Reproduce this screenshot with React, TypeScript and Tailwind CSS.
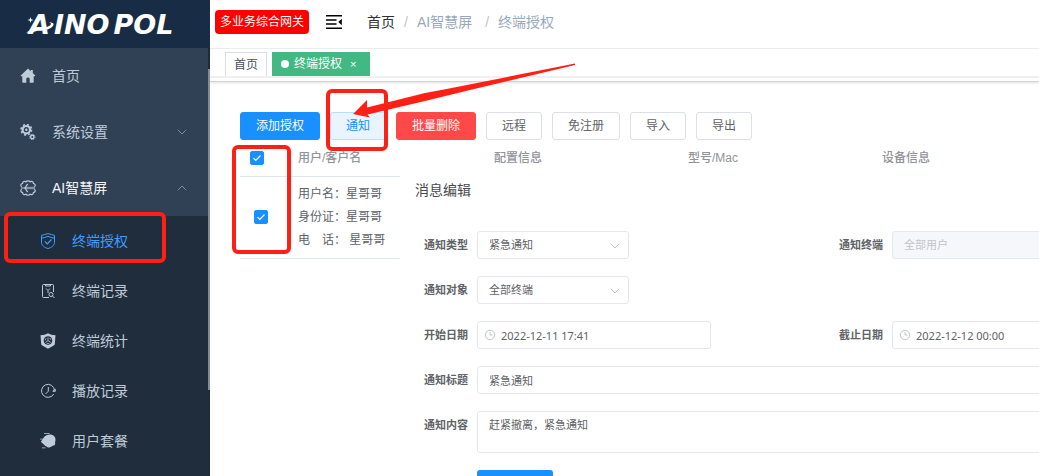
import React from 'react';
import clsx from 'clsx';

type IconProps = { className?: string };

const HomeIcon = ({ className }: IconProps) => (
  <svg viewBox="0 0 16 16" fill="currentColor" className={className}>
    <path d="M8 .6 1 7.200c-.5.5-.2 1.100.4 1.100h.9v5.400c0 .6.4 1 1 1h3v-3.600c0-2 3.400-2 3.400 0v3.600h3c.6 0 1-.4 1-1V8.300h.9c.6 0 .9-.6.4-1.100L12.800 5V2h-2v1.200z" />
  </svg>
);

const GearsIcon = ({ className }: IconProps) => (
  <svg viewBox="0 0 16 16" fill="none" stroke="currentColor" className={className}>
    <circle cx="6.300" cy="5.700" r="3.700" strokeWidth="2.200" />
    <circle cx="6.300" cy="5.700" r="5.200" strokeWidth="1.600" strokeDasharray="2.040 2.040" />
    <circle cx="6.300" cy="5.700" r="1.200" fill="currentColor" stroke="none" />
    <circle cx="12.300" cy="13" r="1.700" strokeWidth="1.400" />
    <circle cx="12.300" cy="13" r="2.700" strokeWidth="1" strokeDasharray="1.060 1.060" />
  </svg>
);

const BrainIcon = ({ className }: IconProps) => (
  <svg viewBox="0 0 16 16" fill="none" stroke="currentColor" strokeWidth="1.200" className={className}>
    <path d="M1.600 6.800C.2 5.600.8 3.700 2.600 3.500 2.400 1.700 4.500.7 5.800 1.900 6.600.4 9.400.4 10.200 1.900c1.300-1.200 3.400-.2 3.200 1.600 1.800.2 2.400 2.100 1 3.300" />
    <path d="M1.600 9.200C.2 10.400.8 12.300 2.600 12.500c-.2 1.800 1.900 2.800 3.200 1.600.8 1.500 3.600 1.500 4.400 0 1.300 1.200 3.400.2 3.200-1.600 1.800-.2 2.400-2.100 1-3.300" />
    <path d="M4.500 8H15" strokeWidth="2.400" opacity=".6" />
    <path d="M1 8h5M8 4.200C6.300 4.500 6.300 6.800 5 8c1.300 1.200 1.300 3.500 3 3.800" />
  </svg>
);

const ShieldIcon = ({ className }: IconProps) => (
  <svg viewBox="0 0 16 16" fill="none" stroke="currentColor" className={className}>
    <path d="M8 .6C6 1.300 3.600 1.500 1.500 2.400v6.800C1.500 12.600 4.500 14.600 8 15.500c3.500-.9 6.500-2.900 6.500-6.300V2.400C12.400 1.500 10 1.300 8 .6z" />
    <path d="M1.500 5.200C4 4.900 6 4.100 8 3.300c2 .8 4 1.600 6.500 1.900" />
    <path d="m4.800 8.400 2.500 2.500L11.500 6.500" strokeWidth="1.200" />
  </svg>
);

const RecordIcon = ({ className }: IconProps) => (
  <svg viewBox="0 0 16 16" fill="none" stroke="currentColor" className={className}>
    <path d="M9 14.500H3.500a1 1 0 0 1-1-1v-11a1 1 0 0 1 1-1h9a1 1 0 0 1 1 1V9" />
    <path d="M5.500 1v2h5V1M6 5.500l2 2 2-2M8 7.500V10" />
    <circle cx="11" cy="11.500" r="2" />
    <path d="m12.500 13 2 2" />
  </svg>
);

const StatsIcon = ({ className }: IconProps) => (
  <svg viewBox="0 0 16 16" className={className}>
    <path
      fill="currentColor"
      d="M8 .3c2 1.200 4.600 1.900 7.500 2l-.7 8.700c-.1.800-.5 1.300-1.100 1.600L8 15.700l-5.700-3.100c-.6-.3-1-.8-1.100-1.600L.5 2.300C3.400 2.200 6 1.500 8 .3z"
    />
    <circle cx="8" cy="7.500" r="4.300" className="fill-[#1f2d3d]" />
    <path
      d="M8 4.300v3.200l-2.500 2M8 7.500l2.800 1.900M6 5.400l-.8 2M9.700 5l1.300 1.800M6.800 10.400h2.400"
      fill="none"
      stroke="currentColor"
      strokeWidth=".8"
    />
  </svg>
);

const HistoryIcon = ({ className }: IconProps) => (
  <svg viewBox="0 0 16 16" fill="none" stroke="currentColor" className={className}>
    <path d="M13.700 11A6.500 6.500 0 1 1 14.500 7.500" />
    <path d="M15.300 6.300v2h-2.500zM8.300 4v4.200L5.500 11" />
  </svg>
);

const PackageIcon = ({ className }: IconProps) => (
  <svg viewBox="0 0 16 16" fill="currentColor" className={className}>
    <path d="M9.500 1.500c3.500-.2 6 2 6 5 0 1.200-.1 2-.5 2.900.5 1.500 0 2.900-1.500 3-1.200.1-2 1-3.200 1.700-1.600.9-3 .5-3.800-.6C5 13 4.600 12 3.300 11L.8 8.800 2.600 6.600C3.800 3.600 6 1.800 9.500 1.500z" />
    <path d="M4 .3h5.500v.7H4zM.2 5.800h3v.7h-3zM2 14.500h3.500v.7H2z" />
  </svg>
);

const Chevron = ({ className }: IconProps) => (
  <svg viewBox="0 0 10 6" fill="none" stroke="currentColor" className={className}>
    <path d="m.8.8 4.200 4.200L9.200.8" />
  </svg>
);

const ClockIcon = ({ className }: IconProps) => (
  <svg viewBox="0 0 12 12" fill="none" stroke="currentColor" className={className}>
    <circle cx="6" cy="6" r="4.700" />
    <path d="M6 3v3h2.500" />
  </svg>
);

const FoldIcon = ({ className }: IconProps) => (
  <svg viewBox="0 0 16 16" fill="none" stroke="currentColor" className={className}>
    <path d="M0 1.700h16M0 6h10.500M0 10h10.500M0 14.300h16" strokeWidth="1.500" />
    <path d="M15.800 4.800v6.400L12.300 8z" fill="currentColor" stroke="none" />
  </svg>
);

const Logo = () => (
  <a
    href="#"
    className="relative flex h-12 shrink-0 items-center gap-1 bg-[#182c45] pl-[29px] font-['DejaVu_Sans',sans-serif] text-[27px] leading-none font-bold text-white italic"
  >
    <span>A</span>
    <span>INO</span>
    <span>POL</span>
    <svg viewBox="0 0 32 22" fill="none" className="absolute top-3 left-6 h-[22px] w-8">
      <path d="M9 18c9 .8 16-1.500 20-5" stroke="#182c45" strokeWidth="1.500" />
      <path
        d="M2 20.500h6c3-1.600 6-2 9-1.800 6-.3 11.500-2.800 12.500-5.700.6-1.800-1.500-2.800-4.500-2.800 2 .7 2.600 1.700 1.200 3C23.500 15.600 17 16.500 10 16.800z"
        fill="#fff"
      />
      <path d="m6.500 5 .7 2.300 2.300.7-2.300.7-.7 2.300-.7-2.300L3.500 8l2.300-.7z" fill="#fff" />
    </svg>
  </a>
);

const menu = [
  { label: '首页', Icon: HomeIcon },
  { label: '系统设置', Icon: GearsIcon, chevron: 'down' },
  { label: 'AI智慧屏', Icon: BrainIcon, chevron: 'up' },
];

const subMenu = [
  { label: '终端授权', Icon: ShieldIcon },
  { label: '终端记录', Icon: RecordIcon },
  { label: '终端统计', Icon: StatsIcon },
  { label: '播放记录', Icon: HistoryIcon },
  { label: '用户套餐', Icon: PackageIcon },
];

const Marker = ({ className }: IconProps) => (
  <div
    className={clsx(
      'pointer-events-none absolute z-20 rounded-md border-4 border-[#ff2015]',
      className
    )}
  />
);

const Sidebar = () => (
  <aside className="flex w-[210px] shrink-0 flex-col bg-[#304156] text-sm text-[#bfcbd9]">
    <Logo />
    <div className="flex flex-1">
      <nav className="flex flex-1 flex-col">
        <ul>
          {menu.map(({ label, Icon, chevron }) => (
            <li key={label}>
              <a
                href="#"
                className={clsx(
                  'flex h-14 items-center px-5',
                  chevron === 'up' && 'text-[#f4f4f5]'
                )}
              >
                <Icon className="mr-4 h-4 w-4 text-[#bfcbd9]" />
                <span className="flex-1">{label}</span>
                {chevron && (
                  <Chevron
                    className={clsx(
                      'mr-px h-1.5 w-2.5 text-[#7f8b99]',
                      chevron === 'up' && 'rotate-180'
                    )}
                  />
                )}
              </a>
            </li>
          ))}
        </ul>
        <ul className="flex-1 bg-[#1f2d3d]">
          {subMenu.map(({ label, Icon }, i) => (
            <li key={label} className="relative">
              <a
                href="#"
                className={clsx(
                  'flex h-[50px] items-center gap-4 pl-10',
                  i === 0 && 'text-[#409eff]'
                )}
              >
                <Icon className="h-4 w-4" />
                {label}
              </a>
              {i === 0 && <Marker className="-top-1 left-1 h-[51px] w-[162px]" />}
            </li>
          ))}
        </ul>
      </nav>
      <div className="w-0.5 bg-[#1f2a38] pt-[21px]">
        <div className="h-[321px] bg-[#858c96]" />
      </div>
    </div>
  </aside>
);

const Header = () => (
  <header className="flex h-[49px] shrink-0 items-center border-b border-[#f0f1f2] px-[5px] pb-1">
    <span className="rounded bg-[#ff0000] px-[5px] text-xs leading-6 text-white">
      多业务综合网关
    </span>
    <button type="button" aria-label="Toggle menu" className="ml-[17px]">
      <FoldIcon className="h-4 w-4 text-black" />
    </button>
    <nav className="ml-[25px] flex gap-[9px] text-sm text-[#97a8be]">
      <a href="#" className="text-[#303133]">
        首页
      </a>
      <span className="text-[#c0c4cc]">/</span>
      <a href="#">AI智慧屏</a>
      <span className="ml-1 text-[#c0c4cc]">/</span>
      <span>终端授权</span>
    </nav>
  </header>
);

const TagBar = () => (
  <div className="shrink-0 border-b border-[#d0d2d6] pb-[3px] shadow-[0_1px_3px_0_rgba(0,0,0,.12)]">
    <div className="flex gap-[5px] border-b-2 border-[#f0f0f0] px-[15px] pt-[3px] text-xs text-[#495060]">
      <a href="#" className="h-6 border border-b-0 border-[#d8dce5] px-2 leading-6">
        首页
      </a>
      <a href="#" className="flex h-6 items-center bg-[#42b983] pr-3.5 pl-[9px] text-white">
        <span className="mr-[5px] h-2 w-2 rounded-full bg-white" />
        终端授权
        <span className="ml-2 text-[11px]">×</span>
      </a>
    </div>
  </div>
);

const buttons = [
  { label: '添加授权', style: 'border-[#1890ff] bg-[#1890ff] text-white' },
  { label: '通知', style: 'border-[#badeff] bg-[#e8f4ff] text-[#1890ff]' },
  { label: '批量删除', style: 'border-[#ff4949] bg-[#ff4949] text-white' },
  { label: '远程', style: 'border-[#dcdfe6] text-[#606266]' },
  { label: '免注册', style: 'border-[#dcdfe6] text-[#606266]' },
  { label: '导入', style: 'border-[#dcdfe6] text-[#606266]' },
  { label: '导出', style: 'border-[#dcdfe6] text-[#606266]' },
];

const Checkbox = ({ label }: { label: string }) => (
  <span className="grid h-3.5 w-3.5">
    <input
      type="checkbox"
      defaultChecked
      aria-label={label}
      className="peer col-start-1 row-start-1 h-3.5 w-3.5 appearance-none rounded-xs border border-[#dcdfe6] checked:border-[#1890ff] checked:bg-[#1890ff]"
    />
    <svg
      viewBox="0 0 14 14"
      fill="none"
      stroke="#fff"
      className="pointer-events-none invisible col-start-1 row-start-1 peer-checked:visible"
    >
      <path d="m3.500 7.200 2.300 2.300 4.700-5" strokeWidth="1.200" />
    </svg>
  </span>
);

const UserTable = () => (
  <table className="w-full table-fixed text-left text-xs text-[#606266]">
    <colgroup>
      <col className="w-12" />
      <col className="w-[196px]" />
      <col className="w-[194px]" />
      <col className="w-[194px]" />
      <col />
    </colgroup>
    <thead className="text-[#909399]">
      <tr className="h-9 border-b border-[#dfe6ec]">
        <th className="px-2.5">
          <Checkbox label="全选" />
        </th>
        <th className="px-2.5 font-medium">用户/客户名</th>
        <th className="px-2.5 font-medium">配置信息</th>
        <th className="px-2.5 font-medium">型号/Mac</th>
        <th className="px-2.5 font-medium">设备信息</th>
      </tr>
    </thead>
    <tbody>
      <tr className="border-b border-[#dfe6ec]">
        <td className="px-3.5">
          <Checkbox label="星哥哥" />
        </td>
        <td className="px-2.5 py-1.5 leading-[23px]">
          <p>用户名：星哥哥</p>
          <p>身份证：星哥哥</p>
          <p>电&emsp;话： 星哥哥</p>
        </td>
        <td />
        <td />
        <td />
      </tr>
    </tbody>
  </table>
);

type FieldProps = {
  id: string;
  label: string;
  className?: string;
  children: React.ReactNode;
};

const Field = ({ id, label, className, children }: FieldProps) => (
  <div className={clsx('flex', className)}>
    <label htmlFor={id} className="mr-[9px] w-[68px] shrink-0 text-right leading-7 font-bold">
      {label}
    </label>
    {children}
  </div>
);

const box = 'w-full rounded-[3px] border border-[#e4e7ed] bg-white px-[11px]';

const SelectBox = ({ id, value }: { id: string; value: string }) => (
  <div className="relative w-[152px]">
    <select id={id} className={clsx(box, 'h-7 appearance-none')}>
      <option>{value}</option>
    </select>
    <Chevron className="pointer-events-none absolute top-3 right-[9px] h-1.5 w-2.5 text-[#c0c4cc]" />
  </div>
);

const DateBox = ({ id, value, className }: { id: string; value: string; className: string }) => (
  <div className={clsx('relative', className)}>
    <ClockIcon className="absolute top-2 left-[7px] h-3 w-3 text-[#c0c4cc]" />
    <input
      id={id}
      defaultValue={value}
      className={clsx(box, "h-7 pl-[23px] font-['Noto_Sans',sans-serif]")}
    />
  </div>
);

const MessageForm = () => (
  <form className="absolute top-9 right-[-60px] left-[160px] z-10 bg-white text-[11px] text-[#606266]">
    <h2 className="pt-1 pb-[31px] pl-[15px] text-sm text-[#48494c]">消息编辑</h2>
    <div className="grid grid-cols-[415px_1fr] gap-y-[17px]">
      <Field id="type" label="通知类型">
        <SelectBox id="type" value="紧急通知" />
      </Field>
      <Field id="terminal" label="通知终端">
        <input
          id="terminal"
          disabled
          placeholder="全部用户"
          className="h-7 w-full rounded-[3px] border border-[#e4e7ed] bg-[#f5f7fa] px-[11px] placeholder:text-[#c0c4cc]"
        />
      </Field>
      <Field id="target" label="通知对象" className="col-span-2">
        <SelectBox id="target" value="全部终端" />
      </Field>
      <Field id="start" label="开始日期">
        <DateBox id="start" value="2022-12-11 17:41" className="w-[234px]" />
      </Field>
      <Field id="end" label="截止日期">
        <DateBox id="end" value="2022-12-12 00:00" className="flex-1" />
      </Field>
      <Field id="title" label="通知标题" className="col-span-2">
        <input id="title" defaultValue="紧急通知" className={clsx(box, 'h-7')} />
      </Field>
      <Field id="content" label="通知内容" className="col-span-2">
        <textarea
          id="content"
          defaultValue="赶紧撤离，紧急通知"
          className={clsx(box, 'h-[42px] resize-none py-1 leading-[18px]')}
        />
      </Field>
      <button
        type="submit"
        aria-label="发送"
        className="ml-[77px] h-7 w-[76px] rounded-[3px] bg-[#1890ff]"
      />
    </div>
  </form>
);

export default function App() {
  return (
    <div className="flex h-screen overflow-hidden bg-white font-['Liberation_Sans','Noto_Sans_CJK_SC',sans-serif]">
      <Sidebar />
      <main className="relative flex min-w-0 flex-1 flex-col overflow-hidden">
        <Header />
        <TagBar />
        <section className="pt-[30px] pl-[30px]">
          <div className="flex gap-2.5">
            {buttons.map(({ label, style }) => (
              <button
                key={label}
                type="button"
                className={clsx('h-7 shrink-0 rounded-[3px] border px-[15px] text-xs', style)}
              >
                {label}
              </button>
            ))}
          </div>
          <div className="relative">
            <UserTable />
            <MessageForm />
          </div>
        </section>
        <Marker className="top-[89px] left-[116px] h-[62px] w-[62px]" />
        <Marker className="top-[145px] left-[22px] h-[109px] w-[59px]" />
        <svg
          viewBox="0 0 224 56"
          className="pointer-events-none absolute top-[63px] left-[142px] z-30 h-14 w-56"
        >
          <path
            d="M1 51 15 37v7.500L73 30l19-3.500L223 .5v1.500L118 27 73 38 15.500 51.500 18 54.500z"
            fill="#ff2015"
          />
        </svg>
      </main>
    </div>
  );
}
